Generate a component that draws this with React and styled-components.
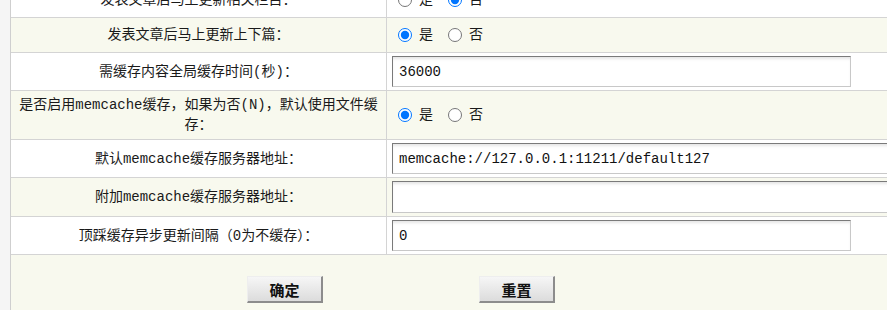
import React from 'react';
import styled, { createGlobalStyle } from 'styled-components';

const GlobalStyle = createGlobalStyle`
  html, body {
    margin: 0;
    padding: 0;
    background: #f5f5f5;
    overflow: hidden;
  }
  body {
    font-family: "Liberation Mono", "Noto Sans CJK SC", monospace;
    font-size: 14px;
    color: #1a1a1a;
  }
`;

const rows = [
  { label: '发表文章后马上更新相关栏目：', type: 'radio', name: 'uplist', value: 'n' },
  { label: '发表文章后马上更新上下篇：', type: 'radio', name: 'upnext', value: 'y' },
  { label: '需缓存内容全局缓存时间(秒)：', type: 'text', value: '36000', width: 459 },
  {
    label: '是否启用memcache缓存，如果为否(N)，默认使用文件缓存：',
    type: 'radio',
    name: 'memcache',
    value: 'y',
  },
  { label: '默认memcache缓存服务器地址：', type: 'text', value: 'memcache://127.0.0.1:11211/default127', width: 620 },
  { label: '附加memcache缓存服务器地址：', type: 'text', value: '', width: 620, tall: true },
  { label: '顶踩缓存异步更新间隔（0为不缓存）：', type: 'text', value: '0', width: 459 },
];

function App() {
  return (
    <styles.Page>
      <GlobalStyle />
      <styles.Table>
        {rows.map((row, index) => (
          <styles.Row key={index} $alt={index % 2 === 1}>
            <styles.Label>{row.label}</styles.Label>
            <styles.Value>
              {row.type === 'radio' ? (
                <>
                  <styles.Option>
                    <styles.Radio type="radio" name={row.name} defaultChecked={row.value === 'y'} />
                    是
                  </styles.Option>
                  <styles.Option>
                    <styles.Radio type="radio" name={row.name} defaultChecked={row.value === 'n'} />
                    否
                  </styles.Option>
                </>
              ) : (
                <styles.Input
                  type="text"
                  defaultValue={row.value}
                  $width={row.width}
                  $tall={row.tall}
                />
              )}
            </styles.Value>
          </styles.Row>
        ))}
        <styles.Actions>
          <styles.Button type="submit">确定</styles.Button>
          <styles.Button type="reset">重置</styles.Button>
        </styles.Actions>
      </styles.Table>
    </styles.Page>
  );
}

const styles = {
  Page: styled.div`
    padding-left: 10px;
    margin-top: -17px;
  `,

  Table: styled.div`
    width: 1200px;
    border-left: 1px solid #cfcfcf;
  `,

  Row: styled.div`
    display: grid;
    grid-template-columns: 376px 1fr;
    min-height: 34px;
    border-bottom: 1px solid #d4d4d4;
    background-color: ${({ $alt }) => ($alt ? '#f8f9ee' : '#ffffff')};
  `,

  Label: styled.div`
    display: flex;
    align-items: center;
    justify-content: center;
    text-align: center;
    padding: 4px 2px;
    line-height: 20px;
    border-right: 1px solid #d4d4d4;
  `,

  Value: styled.div`
    display: flex;
    align-items: center;
    padding: 3px 5px;
  `,

  Option: styled.label`
    display: flex;
    align-items: center;
    margin-right: 9px;
    line-height: 20px;
  `,

  Radio: styled.input`
    width: 14px;
    height: 14px;
    margin: 0 7px 0 6px;
  `,

  Input: styled.input`
    box-sizing: border-box;
    width: ${({ $width }) => $width}px;
    height: ${({ $tall }) => ($tall ? 32 : 31)}px;
    padding: 0 6px;
    font-family: "Liberation Mono", "Noto Sans CJK SC", monospace;
    font-size: 14px;
    color: #111;
    background: #fff;
    border: 1px solid;
    border-color: #7a7a7a #c8c8c8 #c8c8c8 #7a7a7a;
    box-shadow: inset 0 3px 3px -1px rgba(0, 0, 0, 0.1);
    outline: none;
  `,

  Actions: styled.div`
    display: flex;
    gap: 156px;
    padding: 21px 0 0 236px;
    height: 80px;
    background-color: #f8f9ee;
  `,

  Button: styled.button`
    box-sizing: border-box;
    width: 76px;
    height: 27px;
    padding: 0;
    font-family: "Noto Sans CJK SC", sans-serif;
    font-size: 15px;
    font-weight: bold;
    color: #111;
    background: linear-gradient(#f6f6f6, #dcdcdc);
    border: 1px solid;
    border-color: #eeeeee #8c8c8c #8c8c8c #eeeeee;
    border-right-width: 2px;
    border-bottom-width: 2px;
    cursor: pointer;
  `,
};

export default App;
